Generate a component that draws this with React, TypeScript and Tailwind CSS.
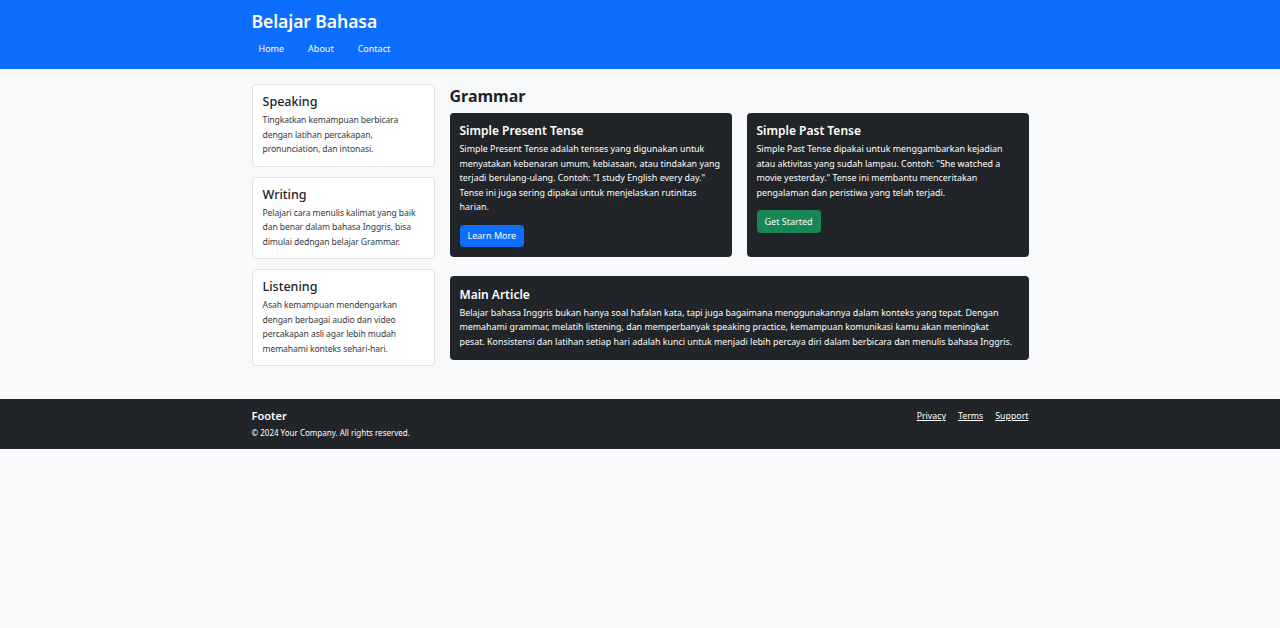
import React from "react";

const skills = [
  {
    title: "Speaking",
    text: "Tingkatkan kemampuan berbicara dengan latihan percakapan, pronunciation, dan intonasi.",
  },
  {
    title: "Writing",
    text: "Pelajari cara menulis kalimat yang baik dan benar dalam bahasa Inggris, bisa dimulai dedngan belajar Grammar.",
  },
  {
    title: "Listening",
    text: "Asah kemampuan mendengarkan dengan berbagai audio dan video percakapan asli agar lebih mudah memahami konteks sehari-hari.",
  },
];

const navLinks = ["Home", "About", "Contact"];

const App = () => {
  return (
    <div
      className="min-h-[628px] bg-[#f8f9fa] text-[#212529]"
      style={{ fontFamily: '"Noto Sans", "Open Sans", sans-serif' }}
    >
      <header className="bg-[#0d6efd] text-white h-[69px]">
        <div className="w-[777px] mx-auto pt-[7px]">
          <h1 className="text-[17.6px] font-semibold leading-[28px] tracking-[-0.1px]">Belajar Bahasa</h1>
          <nav className="flex gap-[10px] mt-[2px]">
            {navLinks.map((link) => (
              <a key={link} href="#" className="px-[7px] text-[9px] leading-[24px]">
                {link}
              </a>
            ))}
          </nav>
        </div>
      </header>

      <div className="w-[777px] mx-auto pt-[15px] pb-[33px] flex gap-[15px] items-start">
        <aside className="w-[183px] shrink-0 flex flex-col gap-[10px]">
          {skills.map((s) => (
            <div
              key={s.title}
              className="bg-white border border-[#dee2e6] rounded-[4px] pl-[10px] pr-[5px] pt-[8px] pb-[9px]"
            >
              <h5 className="text-[12.5px] font-medium leading-[18px] mb-[2px]">{s.title}</h5>
              <p className="text-[8.6px] leading-[14.5px] tracking-[-0.1px] text-[#343a40]">{s.text}</p>
            </div>
          ))}
        </aside>

        <main className="flex-1">
          <h2 className="text-[16px] font-bold leading-[22px] mt-[1px] mb-[6px]">Grammar</h2>
          <div className="flex gap-[15px] items-stretch">
            <div className="flex-1 bg-[#212529] text-white rounded-[4px] pl-[10px] pr-[6px] pt-[9px] pb-[10px]">
              <h5 className="text-[12px] font-semibold leading-[18px] mb-[2px]">Simple Present Tense</h5>
              <p className="text-[8.9px] leading-[14.5px]">
                Simple Present Tense adalah tenses yang digunakan untuk menyatakan kebenaran umum,
                kebiasaan, atau tindakan yang terjadi berulang-ulang. Contoh: "I study English every
                day." Tense ini juga sering dipakai untuk menjelaskan rutinitas harian.
              </p>
              <button className="mt-[10px] bg-[#0d6efd] text-white text-[9px] rounded-[4px] px-[8px] h-[22px]">
                Learn More
              </button>
            </div>
            <div className="flex-1 bg-[#212529] text-white rounded-[4px] pl-[10px] pr-[6px] pt-[9px] pb-[10px]">
              <h5 className="text-[12px] font-semibold leading-[18px] mb-[2px]">Simple Past Tense</h5>
              <p className="text-[8.9px] leading-[14.5px]">
                Simple Past Tense dipakai untuk menggambarkan kejadian atau aktivitas yang sudah
                lampau. Contoh: "She watched a movie yesterday." Tense ini membantu menceritakan
                pengalaman dan peristiwa yang telah terjadi.
              </p>
              <button className="mt-[10px] bg-[#198754] text-white text-[9px] rounded-[4px] px-[8px] h-[23px]">
                Get Started
              </button>
            </div>
          </div>

          <div className="mt-[19px] bg-[#212529] text-white rounded-[4px] pl-[10px] pr-[6px] pt-[10px] pb-[11px]">
            <h5 className="text-[12px] font-semibold leading-[18px] mb-[2px]">Main Article</h5>
            <p className="text-[8.9px] leading-[14.5px]">
              Belajar bahasa Inggris bukan hanya soal hafalan kata, tapi juga bagaimana
              menggunakannya dalam konteks yang tepat. Dengan
              <br />
              memahami grammar, melatih listening, dan memperbanyak speaking practice, kemampuan
              komunikasi kamu akan meningkat
              <br />
              pesat. Konsistensi dan latihan setiap hari adalah kunci untuk menjadi lebih percaya
              diri dalam berbicara dan menulis bahasa Inggris.
            </p>
          </div>
        </main>
      </div>

      <footer className="bg-[#212529] text-white h-[50px]">
        <div className="w-[777px] mx-auto pt-[9px] flex justify-between">
          <div>
            <h5 className="text-[11px] font-semibold leading-[16px]">Footer</h5>
            <p className="text-[8px] leading-[18px]">© 2024 Your Company. All rights reserved.</p>
          </div>
          <div className="flex gap-[12px] text-[8.8px] leading-[16px]">
            <a href="#" className="underline">Privacy</a>
            <a href="#" className="underline">Terms</a>
            <a href="#" className="underline">Support</a>
          </div>
        </div>
      </footer>
    </div>
  );
};

export default App;
